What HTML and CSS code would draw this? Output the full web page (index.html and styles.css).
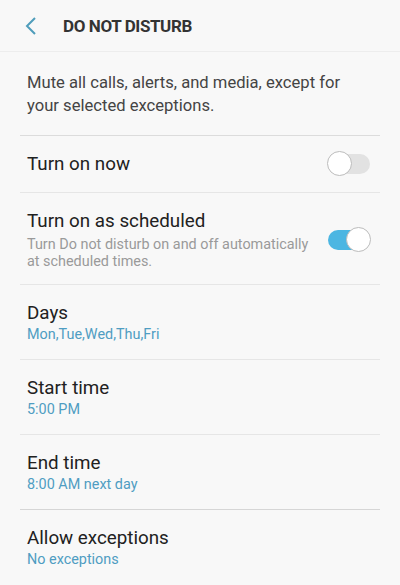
FILE: index.html
```html
<!DOCTYPE html>
<html lang="en">
<head>
    <meta charset="UTF-8">
    <meta name="viewport" content="width=device-width, initial-scale=1.0">
    <title>Do not disturb</title>
    <link rel="stylesheet" href="styles.css">
</head>
<body>
    <div class="header">
        <svg class="back" width="12" height="20" viewBox="0 0 12 20">
            <path d="M10 2 L2 10 L10 18" fill="none" stroke="#4f9dbb" stroke-width="2"/>
        </svg>
        <h1>DO NOT DISTURB</h1>
    </div>

    <div class="content">
        <p class="intro">Mute all calls, alerts, and media, except for your selected exceptions.</p>

        <div class="row single">
            <div class="text">
                <div class="title">Turn on now</div>
            </div>
            <span class="switch"></span>
        </div>

        <div class="row">
            <div class="text">
                <div class="title">Turn on as scheduled</div>
                <div class="note">Turn Do not disturb on and off automatically at scheduled times.</div>
            </div>
            <span class="switch on"></span>
        </div>

        <div class="row">
            <div class="text">
                <div class="title">Days</div>
                <div class="value">Mon,Tue,Wed,Thu,Fri</div>
            </div>
        </div>

        <div class="row">
            <div class="text">
                <div class="title">Start time</div>
                <div class="value">5:00 PM</div>
            </div>
        </div>

        <div class="row section-end">
            <div class="text">
                <div class="title">End time</div>
                <div class="value">8:00 AM next day</div>
            </div>
        </div>

        <div class="row last">
            <div class="text">
                <div class="title">Allow exceptions</div>
                <div class="value">No exceptions</div>
            </div>
        </div>
    </div>
</body>
</html>
```

FILE: styles.css
```css
body {
    margin: 0;
    font-family: Roboto, "Noto Sans", sans-serif;
    background-color: #f8f8f8;
    color: #212121;
}

.header {
    height: 51px;
    display: flex;
    align-items: center;
    border-bottom: 1px solid #ededed;
}

.back {
    margin-left: 25px;
}

.header h1 {
    margin: 0 0 0 26px;
    font-size: 17px;
    font-weight: bold;
    letter-spacing: -0.4px;
    color: #333;
}

.content {
    padding: 0 20px;
}

.intro {
    margin: 0;
    padding: 19px 30px 18px 7px;
    font-size: 16.6px;
    line-height: 23px;
    color: #444;
    border-bottom: 1px solid #dcdcdc;
}

.row {
    display: flex;
    align-items: center;
    padding: 16px 7px 14px;
    border-bottom: 1px solid #e6e6e6;
}

.row.single {
    padding-bottom: 16px;
}

.row.section-end {
    border-bottom-color: #d6d6d6;
}

.row.last {
    border-bottom: none;
}

.text {
    flex: 1;
}

.title {
    font-size: 18.8px;
    line-height: 24px;
}

.note {
    max-width: 285px;
    margin-top: 3px;
    font-size: 14.4px;
    line-height: 17px;
    color: #9a9a9a;
}

.value {
    font-size: 14.4px;
    line-height: 20px;
    color: #4f9dc2;
}

.switch {
    position: relative;
    width: 42px;
    height: 20px;
    margin-right: 3px;
    border-radius: 10px;
    background-color: #e2e2e2;
}

.switch::after {
    content: "";
    position: absolute;
    top: -3px;
    left: -1px;
    width: 23px;
    height: 23px;
    border-radius: 50%;
    background-color: #fff;
    border: 1px solid #bcbcbc;
}

.switch.on {
    background-color: #4cb6e2;
}

.switch.on::after {
    left: 18px;
}
```
